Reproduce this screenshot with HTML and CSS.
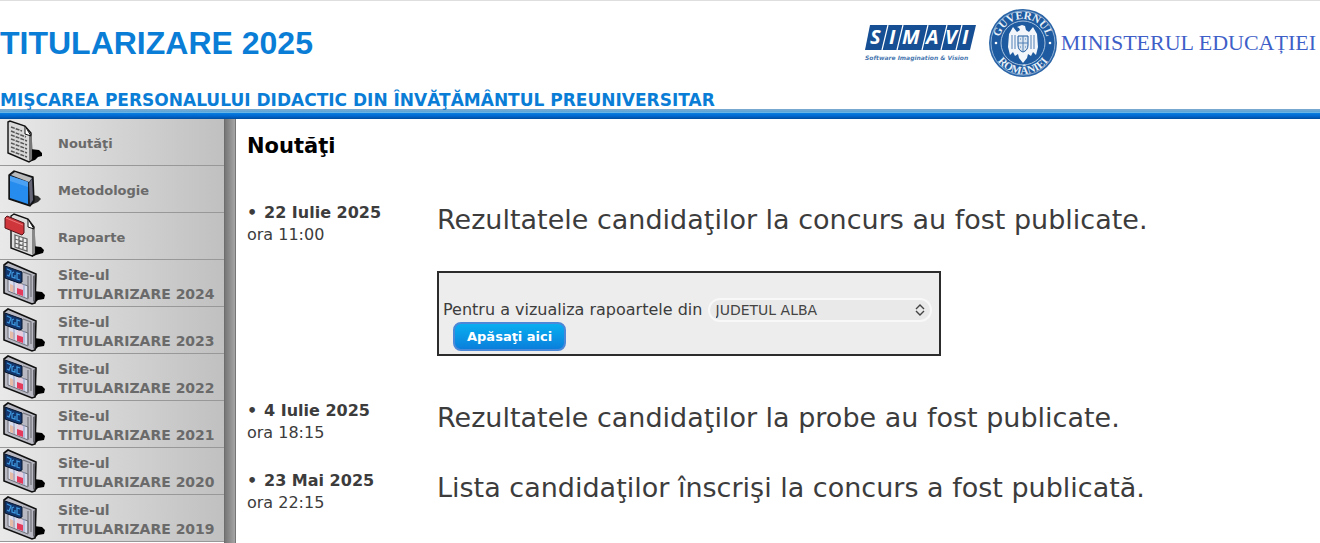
FILE: index.html
```
<!DOCTYPE html>
<html lang="ro">
<head>
    <meta charset="UTF-8">
    <title>Titularizare 2025</title>
    <link rel="stylesheet" href="styles.css">
</head>
<body>
    <svg class="sprite" aria-hidden="true">
        <symbol id="ico-news" viewBox="0 0 48 46">
            <path d="M30 30l9 1 3 3v3l-4 1-3 3-6 2z" fill="#000"/>
            <path d="M8 3l2-1 15 5 6 7 1 27-3 2-21-9z" fill="#d9d9d9" stroke="#111" stroke-width="1.4"/>
            <path d="M29 17v25l3-2V16z" fill="#777"/>
            <path d="M25 7v8l6 2z" fill="#fff" stroke="#111"/>
            <path d="M11 8l11 4M11 12l15 6M11 16l16 6M11 20l16 6M11 24l16 6M11 28l16 6M11 32l16 6" stroke="#555" stroke-width="1.5" stroke-dasharray="4 1"/>
        </symbol>
        <symbol id="ico-book" viewBox="0 0 48 46">
            <path d="M33 29l5 1 3 3-3 3-7 3z" fill="#333"/>
            <path d="M9 9l5-4 19 6 1 24-4 5-21-7z" fill="#1a2230" stroke="#111" stroke-width="1.4"/>
            <path d="M11 9l4-3 17 6-3 4z" fill="#bbb"/>
            <path d="M10 10l18 6v22l-18-6z" fill="#268cee"/>
            <path d="M10 10l18 6v5L10 15z" fill="#4ba2f4"/>
            <path d="M29 17l3-4 1 21-3 4z" fill="#667"/>
        </symbol>
        <symbol id="ico-report" viewBox="0 0 48 46">
            <path d="M33 33l8 1 3 3-1 3-7 2-4 2z" fill="#000"/>
            <path d="M11 3l3-2 14 5 6 8 1 27-3 2-21-8z" fill="#ddd" stroke="#111" stroke-width="1.4"/>
            <path d="M32 16v26l3-2V15z" fill="#888"/>
            <path d="M28 6v8l6 2z" fill="#fff" stroke="#111"/>
            <path d="M15 22l12 4v12l-12-4zM15 26l12 4M15 30l12 4M19 24v11M23 25v11" fill="#eee" stroke="#666" stroke-width="1.3"/>
            <path d="M5 5l2-2 17 7v10l-2 2-17-7z" fill="#cf363c" stroke="#51151a"/>
            <path d="M6 5l17 7" stroke="#ee7777"/>
        </symbol>
        <symbol id="ico-site" viewBox="0 0 48 46">
            <path d="M34 31l8 1 3 3-1 4-6 1-3 3z" fill="#000"/>
            <path d="M4 5l4-3 28 12-1 29-3 1L4 33z" fill="#b8b9c2" stroke="#111" stroke-width="1.6"/>
            <path d="M33 16v26l2-2V15z" fill="#66666e"/>
            <path d="M8 19l20 7v13L8 31z" fill="#d8dceb" stroke="#707078"/>
            <path d="M23 12l8 3v22M28 16v22" fill="none" stroke="#73737b" stroke-width="1.2"/>
            <path d="M10 24l5 2v7l-5-2z" fill="#e5bca8"/>
            <path d="M17 23l6 2v6l-6-2z" fill="#e7cede"/>
            <path d="M17 28l6 2v6l-6-2z" fill="#e43b5d"/>
            <path d="M14 20v13M24 24v13" stroke="#8d9acb"/>
            <path d="M5 6l17 6v10l-3 1L5 18z" fill="#12366d" stroke="#07162e"/>
            <path d="M7 9l4 2-2 5-2-1M14 12l-2 1v4l3 1v-3M20 14l-3-1v6l3 1" fill="none" stroke="#3d96dd" stroke-width="1.3"/>
        </symbol>
    </svg>

    <header class="header">
        <div class="header-top">
            <h1 class="title">TITULARIZARE 2025</h1>
            <div class="logos">
                <svg class="logo-simavi" viewBox="0 0 114 42" role="img" aria-label="SIMAVI Software Imagination &amp; Vision">
                    <path d="M6 3h106l-6 25H1z" fill="#174f94"/>
                    <path d="M24 3l-6 25M39 3l-6 25M64 3l-6 25M83 3l-6 25M98 3l-6 25" stroke="#fff" stroke-width="1.2"/>
                    <g class="simavi-name">
                        <text x="6" y="22">S</text>
                        <text x="25" y="22">I</text>
                        <text x="38" y="22">M</text>
                        <text x="62" y="22">A</text>
                        <text x="81" y="22">V</text>
                        <text x="98" y="22">I</text>
                    </g>
                    <text class="simavi-tag" x="1" y="38">Software Imagination &amp; Vision</text>
                </svg>
                <svg class="logo-gov" viewBox="0 0 70 70" role="img" aria-label="Guvernul României">
                    <defs>
                        <path id="arc-top" d="M11 35a24 24 0 0 1 48 0"/>
                        <path id="arc-bottom" d="M4 35a31 31 0 0 0 62 0"/>
                    </defs>
                    <circle cx="35" cy="35" r="34" fill="#2b65a7"/>
                    <circle cx="35" cy="35" r="32" fill="#1e5a9f" stroke="#8fb0d4" stroke-width="1"/>
                    <circle cx="35" cy="35" r="22" fill="#1e5a9f" stroke="#a7c2df" stroke-width="1"/>
                    <text class="gov-text"><textPath href="#arc-top" startOffset="50%">GUVERNUL</textPath></text>
                    <text class="gov-text"><textPath href="#arc-bottom" startOffset="50%">ROMÂNIEI</textPath></text>
                    <circle cx="8" cy="35" r="1.3" fill="#fff"/>
                    <circle cx="62" cy="35" r="1.3" fill="#fff"/>
                    <path d="M34 17l3 1 1 4 3 2 4-5 4 7 1 13-2 8-3-3-2 4-3-2-1 4-4 5-4-5-1-4-3 2-2-4-3 3-2-8 1-13 4-7 4 5 3-2-1-2-2-1z" fill="#f2f6fa"/>
                    <path d="M30 28h10v9c0 4-2 6-5 7-3-1-5-3-5-7z" fill="#dbe6f1" stroke="#1e5a9f"/>
                    <path d="M35 28v15M30 35h10M24 27v14M27 27v14M43 27v14M46 27v14M32 31h1M37 31h1M32 39h1M37 39h1" stroke="#4f7fb4"/>
                </svg>
                <span class="ministry">MINISTERUL EDUCAȚIEI</span>
            </div>
        </div>
        <h2 class="subtitle">MIŞCAREA PERSONALULUI DIDACTIC DIN ÎNVĂŢĂMÂNTUL PREUNIVERSITAR</h2>
    </header>
    <div class="bar"></div>

    <div class="page">
        <nav class="menu">
            <a href="#noutati"><svg><use href="#ico-news"/></svg><span>Noutăţi</span></a>
            <a href="#metodologie"><svg><use href="#ico-book"/></svg><span>Metodologie</span></a>
            <a href="#rapoarte"><svg><use href="#ico-report"/></svg><span>Rapoarte</span></a>
            <a class="site" href="#2024"><svg><use href="#ico-site"/></svg><span>Site-ul<br>TITULARIZARE 2024</span></a>
            <a class="site" href="#2023"><svg><use href="#ico-site"/></svg><span>Site-ul<br>TITULARIZARE 2023</span></a>
            <a class="site" href="#2022"><svg><use href="#ico-site"/></svg><span>Site-ul<br>TITULARIZARE 2022</span></a>
            <a class="site" href="#2021"><svg><use href="#ico-site"/></svg><span>Site-ul<br>TITULARIZARE 2021</span></a>
            <a class="site" href="#2020"><svg><use href="#ico-site"/></svg><span>Site-ul<br>TITULARIZARE 2020</span></a>
            <a class="site" href="#2019"><svg><use href="#ico-site"/></svg><span>Site-ul<br>TITULARIZARE 2019</span></a>
        </nav>

        <main class="content" id="noutati">
            <h2 class="content-title">Noutăţi</h2>

            <div class="news">
                <div class="date"><b><i class="dot">•</i>22 Iulie 2025</b>ora 11:00</div>
                <div class="text">
                    <p>Rezultatele candidaţilor la concurs au fost publicate.</p>
                    <form class="report-form">
                        <label for="judet">Pentru a vizualiza rapoartele din</label>
                        <span class="select">
                            <select id="judet">
                                <option>JUDETUL ALBA</option>
                            </select>
                            <svg viewBox="0 0 10 12"><path d="M1 5l4-4 4 4M1 7l4 4 4-4" fill="none" stroke="#444" stroke-width="1.4"/></svg>
                        </span>
                        <button type="button">Apăsaţi aici</button>
                    </form>
                </div>
            </div>

            <div class="news">
                <div class="date"><b><i class="dot">•</i>4 Iulie 2025</b>ora 18:15</div>
                <div class="text">
                    <p>Rezultatele candidaţilor la probe au fost publicate.</p>
                </div>
            </div>

            <div class="news">
                <div class="date"><b><i class="dot">•</i>23 Mai 2025</b>ora 22:15</div>
                <div class="text">
                    <p>Lista candidaţilor înscrişi la concurs a fost publicată.</p>
                </div>
            </div>
        </main>
    </div>
</body>
</html>
```
FILE: styles.css
```
* {
    box-sizing: border-box;
}
body {
    margin: 0;
    background: #fff;
    color: #3c3c3c;
    font-family: Verdana, "DejaVu Sans", sans-serif;
    font-size: 16px;
    overflow: hidden;
}
.sprite {
    display: none;
}

/* header */
.header {
    border-top: 1px solid #dedede;
    color: #0a7dd6;
}
.header-top {
    display: flex;
    justify-content: space-between;
    align-items: center;
    height: 84px;
    padding-right: 4px;
}
.title {
    margin: 0;
    font-family: Arial, "Liberation Sans", sans-serif;
    font-size: 32px;
}
.logos {
    display: flex;
    align-items: center;
}
.logo-simavi {
    width: 114px;
    height: 42px;
    margin-right: 10px;
}
.simavi-name {
    fill: #fff;
    font: italic bold 20px "Open Sans", sans-serif;
}
.simavi-tag {
    fill: #4a78b0;
    font: italic bold 6px "DejaVu Sans", sans-serif;
}
.logo-gov {
    width: 70px;
    height: 70px;
    margin-right: 3px;
}
.gov-text {
    fill: #e8f0f8;
    font: bold 11px "Liberation Serif", serif;
    text-anchor: middle;
}
.ministry {
    color: #3f5fc8;
    font-family: "Liberation Serif", serif;
    font-size: 22px;
}
.subtitle {
    margin: 0;
    padding-top: 6px;
    font-size: 17px;
    line-height: 18px;
}
.bar {
    height: 10px;
    background: linear-gradient(#6f9dc4 0, #7fb4dc 10%, #5a9fd0 20%, #6dbcec 40%, #0a7ce0 42%, #0068d0 70%, #004c9c 100%);
}

/* layout */
.page {
    display: flex;
    align-items: stretch;
}
.menu {
    flex: none;
    width: 236px;
    padding-right: 12px;
    background: linear-gradient(90deg, #666 0, #777 10%, #a4a4a4 90%, #555 100%) right / 12px 100% no-repeat;
}
.menu a {
    display: flex;
    align-items: center;
    height: 47px;
    border-bottom: 1px solid #989898;
    background: linear-gradient(90deg, #e9e9e9, #c0c0c0);
    color: #6a6a6a;
    font-size: 13px;
    font-weight: bold;
    line-height: 19px;
    text-decoration: none;
}
.menu svg {
    flex: none;
    width: 48px;
    height: 46px;
    margin-right: 10px;
}
.menu span {
    padding-top: 2px;
}
.menu .site {
    font-size: 14px;
}
.menu .site span {
    padding-top: 4px;
}

/* news */
.content {
    flex: 1;
    padding: 13px 11px;
}
.content-title {
    margin: 0 0 41px;
    color: #000;
    font-size: 21px;
    line-height: 29px;
}
.news {
    display: flex;
    margin-bottom: 26px;
}
.date {
    flex: none;
    width: 190px;
    line-height: 22px;
}
.date b {
    display: block;
}
.dot {
    display: inline-block;
    width: 17px;
    font-style: normal;
}
.text p {
    margin: 0;
    font-size: 27px;
    line-height: 36px;
}
.report-form {
    width: 504px;
    margin: 33px 0 18px;
    padding: 25px 4px 3px;
    border: 2px solid #2c2c2c;
    background: #ededed;
}
.select {
    display: inline-block;
    position: relative;
    width: 224px;
}
.select select {
    appearance: none;
    width: 100%;
    height: 24px;
    padding: 0 6px;
    border: 2px solid #f8f8f8;
    border-radius: 12px;
    background: #e9e9e9;
    color: #444;
    font-family: Verdana, "DejaVu Sans", sans-serif;
    font-size: 14px;
}
.select svg {
    position: absolute;
    top: 6px;
    right: 7px;
    width: 10px;
    height: 12px;
    pointer-events: none;
}
.report-form button {
    display: block;
    height: 29px;
    margin-left: 10px;
    padding: 0 12px;
    border: 2px solid #4b88d8;
    border-radius: 8px;
    background: linear-gradient(#09aef0, #0a7fdc);
    color: #fff;
    font-family: Verdana, "DejaVu Sans", sans-serif;
    font-size: 13px;
    font-weight: bold;
}
```
